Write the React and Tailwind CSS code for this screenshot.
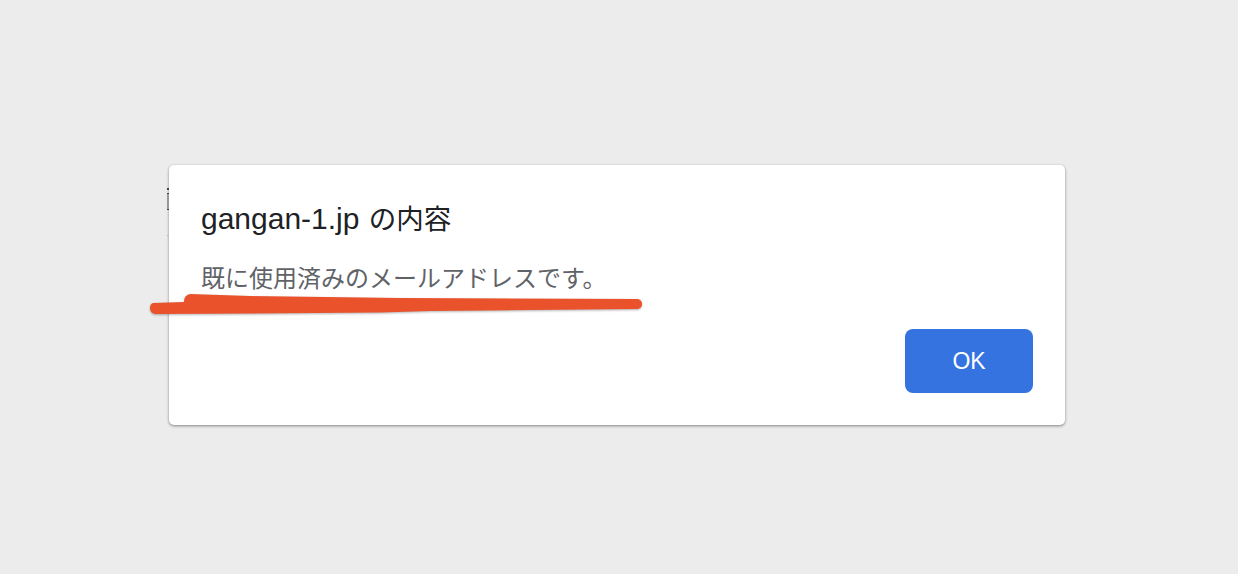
export default function App() {
  return (
    <div className="w-[1238px] h-[574px] overflow-hidden bg-[#ececec] pt-[165px] pl-[169px] font-['Liberation_Sans','Noto_Sans_CJK_JP',sans-serif]">
      <div className="relative w-[896px] h-[260px] bg-white rounded-[5px] shadow-[0_1px_3px_rgba(0,0,0,0.45)] pt-[36px] pl-[32px] pr-[32px]">
        <div className="absolute left-[-2px] top-[23px] w-[2px] h-[48px] flex flex-col">
          <div className="h-[2px] bg-[#444444]"></div>
          <div className="h-[3px]"></div>
          <div className="h-[1px] bg-[#444444]"></div>
          <div className="h-[15px] bg-[#999999]"></div>
          <div className="h-[1px] bg-[#444444]"></div>
          <div className="h-[1px] mt-[25px] bg-[#bbbbbb]"></div>
        </div>
        <h1 className="text-[30px] leading-[36px] text-[#202124] font-normal">gangan-1.jp <span className="text-[27.5px] ml-px">の内容</span></h1>
        <p className="mt-[25px] text-[24px] leading-[32px] text-[#5f6368]">既に使用済みのメールアドレスです。</p>
        <div className="mt-[34px] flex justify-end">
          <button className="w-[128px] h-[64px] rounded-[8px] bg-[#3574e0] text-white text-[23px]">OK</button>
        </div>
        <svg className="absolute left-[-24px] top-[125px] overflow-visible" width="500" height="30" viewBox="0 0 500 30" fill="none">
          <path d="M8 13 L39 12 Q39 5 45 4 L105 6 L255 8 L493 9 Q497 10 497 14 Q497 18 493 19 L285 21 L235 22.5 L105 23.5 L10 24 Q5 23 5 18 Q5 14 8 13 Z" fill="#ea522c" style={{ filter: "drop-shadow(0 1px 1px rgba(0,0,0,0.3))" }} />
        </svg>
      </div>
    </div>
  );
}
